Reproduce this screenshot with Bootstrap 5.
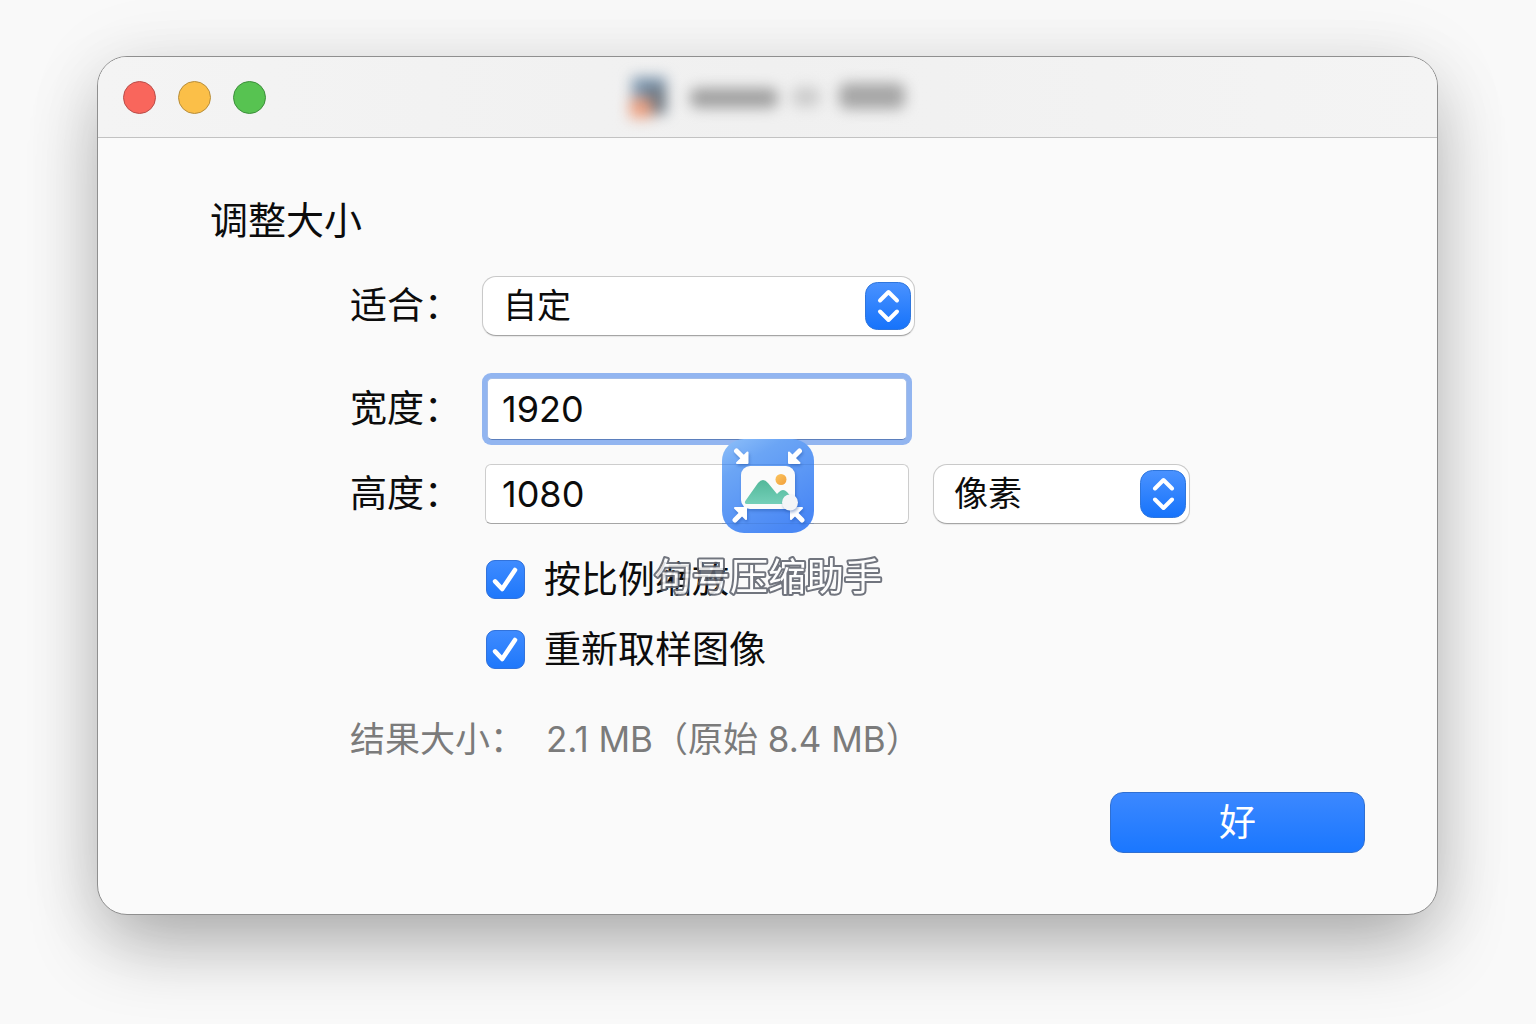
<!DOCTYPE html>
<html lang="zh-CN">
<head>
<meta charset="utf-8">
<meta name="viewport" content="width=device-width, initial-scale=1">
<title>调整大小</title>
<link rel="stylesheet" href="https://cdn.jsdelivr.net/npm/bootstrap@5.3.0/dist/css/bootstrap.min.css">
<style>
  body { background: #f9f9f9; color: #0c0c0c; font-family: Inter, "Noto Sans CJK SC", sans-serif; }
  .stage { padding: 56px 98px 80px 97px; min-height: 100vh; }
  .dialog {
    background: #fafafa; border: 1px solid #8f8f8f; border-radius: 30px;
    box-shadow: 0 34px 74px -8px rgba(0,0,0,.3), 0 4px 80px rgba(0,0,0,.08);
  }
  .titlebar {
    height: 81px; padding: 0 25px; border-bottom: 1px solid #c2c2c2;
    border-radius: 29px 29px 0 0; background: linear-gradient(90deg, #f4f4f4, #f0f0f0 50%, #f4f4f4);
  }
  .lights { gap: 22px; flex: 1 1 0; }
  .light { width: 33px; height: 33px; padding: 0; border-radius: 50%; border: 1px solid; }
  .light-close { background: #f9665c; border-color: #b94d49; }
  .light-min { background: #fbbf48; border-color: #b78e3c; }
  .light-zoom { background: #57c351; border-color: #3d8f3b; }
  .sheet { padding: 52px 72px 61px 112px; }
  .sheet-title { font-size: 38px; line-height: 60px; margin: 0 0 26px; font-weight: 400; }
  .fields { padding-left: 140px; }
  .field-label { width: 132px; font-size: 37px; line-height: 60px; flex: none; }
  .popup { position: relative; flex: none; }
  .popup-fit { width: 433px; max-width: 100%; }
  .popup-unit { width: 257px; margin-left: 21px; }
  .popup .form-select {
    height: 60px; padding: 0 60px 0 20px; font-size: 34px; line-height: 56px; color: inherit;
    background: #fff; border: 1px solid #c9c9c9; border-bottom-color: #a5a5a5; border-radius: 14px;
    box-shadow: 0 1px 1px rgba(0,0,0,.08);
  }
  .popup svg { position: absolute; right: 4px; top: 6px; pointer-events: none; }
  .entry { width: 430px; padding: 3px; border-radius: 9px; }
  .entry .form-control {
    height: 60px; padding: 0 0 0 16px; font-size: 36px; line-height: 56px; color: inherit;
    background: #fff; border: 1px solid #cdcdcd; border-bottom-color: #a5a5a5; border-radius: 6px;
  }
  .entry-row { padding-top: 37px; }
  .entry-active { padding: 5px; background: #92b5f0; }
  .entry-active .form-control { height: 62px; padding-left: 14px; border-color: #a4bde8; border-bottom-color: #5b7fbd; border-radius: 5px; }
  .checks { padding: 33px 0 0 136px; gap: 31px; }
  .tick { gap: 19px; height: 39px; }
  .tick .form-check-input {
    width: 39px; height: 39px; margin: 0; border: 1px solid #3273dc; border-radius: 9px; flex: none;
  }
  .tick .form-check-input:checked {
    background-image: url("data:image/svg+xml,%3Csvg xmlns='http://www.w3.org/2000/svg' viewBox='0 0 39 39'%3E%3Cpath d='M8.500 21.500l7.500 8L29.500 9.500' fill='none' stroke='%23fff' stroke-width='4.800' stroke-linecap='round' stroke-linejoin='round'/%3E%3C/svg%3E"), linear-gradient(#3f8bff, #1f78fb);
    background-size: 100% 100%;
  }
  .tick label { font-size: 37px; line-height: 39px; }
  .result { color: #7b7b7b; font-size: 35px; line-height: 52px; padding-top: 44px; }
  .result dt { width: 196px; font-weight: 400; }
  .ok {
    width: 255px; height: 61px; padding: 0; font-size: 37px; line-height: 56px; color: #fff;
    border: 1px solid #2f6fd2; border-radius: 13px; background: linear-gradient(#3c88ff, #1a77ff);
  }
  .ok:hover { color: #fff; background: #1a77ff; }
  .actions { padding-top: 27px; }
  .doc-title { filter: blur(7px); }
  .stamp { position: absolute; left: 50%; top: 380px; transform: translateX(-50%); pointer-events: none; }
</style>
</head>
<body>
<main class="stage">
  <section class="dialog position-relative" aria-labelledby="heading">
    <header class="titlebar d-flex align-items-center">
      <div class="lights d-flex">
        <button type="button" class="light light-close" aria-label="关闭"></button>
        <button type="button" class="light light-min" aria-label="最小化"></button>
        <button type="button" class="light light-zoom" aria-label="缩放"></button>
      </div>
      <svg class="doc-title" width="310" height="76" viewBox="0 0 310 76" aria-hidden="true">
        <rect x="19" y="18" width="34" height="22" fill="#7d96ae"/>
        <rect x="34" y="28" width="19" height="27" fill="#68747f"/>
        <rect x="17" y="39" width="22" height="20" fill="#eb9f80"/>
        <rect x="77" y="29" width="88" height="20" rx="8" fill="#a0a0a0"/>
        <rect x="179" y="28" width="28" height="20" rx="8" fill="#cccccc"/>
        <rect x="226" y="24" width="66" height="26" rx="8" fill="#a6a6a6"/>
      </svg>
      <div class="lights"></div>
    </header>

    <form class="sheet">
      <h1 class="sheet-title" id="heading">调整大小</h1>
      <div class="fields">
        <div class="d-flex align-items-center">
          <label class="field-label" for="fit">适合：</label>
          <div class="popup popup-fit">
            <select class="form-select" id="fit"><option>自定</option></select>
            <svg width="46" height="48" viewBox="0 0 46 48" aria-hidden="true">
              <defs><linearGradient id="blue" x1="0" y1="0" x2="0" y2="1"><stop stop-color="#4a92ff"/><stop offset="1" stop-color="#1673fb"/></linearGradient></defs>
              <rect x=".5" y=".5" width="45" height="47" rx="12" fill="url(#blue)" stroke="#2f76dd"/>
              <path d="M15 18.500l8.500-8.500 8.500 8.500M15 29.500l8.500 8.500 8.500-8.500" fill="none" stroke="#fff" stroke-width="4" stroke-linecap="round" stroke-linejoin="round"/>
            </svg>
          </div>
        </div>
        <div class="entry-row d-flex align-items-center">
          <label class="field-label" for="width">宽度：</label>
          <div class="entry entry-active"><input class="form-control" id="width" type="text" inputmode="numeric" value="1920"></div>
        </div>
        <div class="d-flex align-items-center pt-3">
          <label class="field-label" for="height">高度：</label>
          <div class="entry"><input class="form-control" id="height" type="text" inputmode="numeric" value="1080"></div>
          <div class="popup popup-unit">
            <select class="form-select" id="unit" aria-label="单位"><option>像素</option></select>
            <svg width="46" height="48" viewBox="0 0 46 48" aria-hidden="true">
              <rect x=".5" y=".5" width="45" height="47" rx="12" fill="url(#blue)" stroke="#2f76dd"/>
              <path d="M15 18.500l8.500-8.500 8.500 8.500M15 29.500l8.500 8.500 8.500-8.500" fill="none" stroke="#fff" stroke-width="4" stroke-linecap="round" stroke-linejoin="round"/>
            </svg>
          </div>
        </div>
        <div class="checks d-flex flex-column">
          <div class="tick d-flex align-items-center">
            <input class="form-check-input" type="checkbox" id="ratio" checked>
            <label for="ratio">按比例缩放</label>
          </div>
          <div class="tick d-flex align-items-center">
            <input class="form-check-input" type="checkbox" id="resample" checked>
            <label for="resample">重新取样图像</label>
          </div>
        </div>
        <dl class="result d-flex mb-0">
          <dt>结果大小：</dt>
          <dd class="mb-0">2.1 MB（原始 8.4 MB）</dd>
        </dl>
      </div>
      <div class="actions d-flex justify-content-end">
        <button type="submit" class="btn ok">好</button>
      </div>
    </form>

    <svg class="stamp" width="250" height="170" viewBox="0 0 250 170" role="img" aria-label="句号压缩助手">
      <defs>
        <linearGradient id="tile" x1="0" y1="0" x2=".6" y2="1"><stop stop-color="#8fc0f9"/><stop offset=".3" stop-color="#6ba5f5"/><stop offset="1" stop-color="#4a88f5"/></linearGradient>
        <linearGradient id="sun" x1="0" y1="0" x2="1" y2="1"><stop stop-color="#fbc55f"/><stop offset="1" stop-color="#f29f3b"/></linearGradient>
        <linearGradient id="hill" x1="0" y1="0" x2="0" y2="1"><stop stop-color="#52b89a"/><stop offset="1" stop-color="#74cfb8"/></linearGradient>
        <filter id="drop" x="-20%" y="-20%" width="150%" height="150%" color-interpolation-filters="sRGB"><feDropShadow dx="1" dy="2" stdDeviation="1.500" flood-color="#1b4aa0" flood-opacity=".4"/></filter>
      </defs>
      <rect x="79" y="2" width="92" height="94" rx="22" fill="url(#tile)"/>
      <path d="M79 27.500h92M79 86.500h92" stroke="#3b6fc4" stroke-opacity=".3"/>
      <g filter="url(#drop)">
        <rect x="98" y="29" width="54" height="43" rx="9" fill="#fbfbfb"/>
        <g fill="#fff" stroke="#fff" stroke-linecap="round" stroke-linejoin="round">
          <path d="M93.500 14l7 7M156.500 14l-7 7M92 83l7-7M159 83l-7-7" stroke-width="5"/>
          <path d="M104.500 15.500v10.500h-10.500zM146 15.500v10.500h10.500zM103 82v-11h-11zM148 82v-11h11z" stroke-width="2"/>
        </g>
      </g>
      <path d="M103 63L115 46q5-6 10 0l9 11 2-2q4-4 8 0l6 7v4q0 1-2 1H105q-5 0-2-4z" fill="url(#hill)"/>
      <circle cx="138" cy="42.500" r="5.500" fill="url(#sun)"/>
      <circle cx="147" cy="65.500" r="8" fill="#f4f5f7" filter="url(#drop)"/>
      <text x="125" y="153" text-anchor="middle" font-family="'Noto Sans CJK SC', sans-serif" font-size="38" font-weight="400" fill="#fff" stroke="#5f636e" stroke-width="4" stroke-linejoin="round" paint-order="stroke" opacity=".88">句号压缩助手</text>
    </svg>
  </section>
</main>
<script src="https://cdn.jsdelivr.net/npm/bootstrap@5.3.0/dist/js/bootstrap.bundle.min.js"></script>
</body>
</html>
